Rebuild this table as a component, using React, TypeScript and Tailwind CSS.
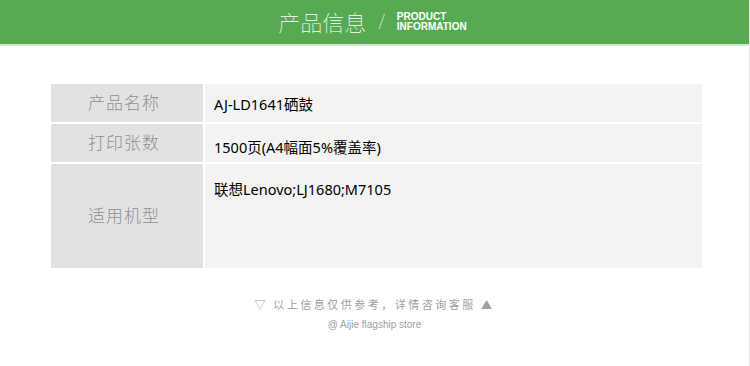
import React from "react";

const rows = [
  { label: "产品名称", value: "AJ-LD1641硒鼓", h: "h-[38px]", pt: "pt-[11px]" },
  { label: "打印张数", value: "1500页(A4幅面5%覆盖率)", h: "h-[38px]", pt: "pt-[14px]" },
  { label: "适用机型", value: "联想Lenovo;LJ1680;M7105", h: "h-[104px]", pt: "pt-[16px]" },
];

export default function App() {
  return (
    <div
      className="w-[750px] h-[366px] bg-white border-r border-[#e8e8e8] overflow-hidden"
      style={{ fontFamily: '"Noto Sans", "Noto Sans CJK SC", sans-serif' }}
    >
      <div className="h-[46px] bg-[#58aa52] border-b-2 border-[#d3e6d0] flex items-center justify-center">
        <div className="flex items-center ml-[-4px]">
          <span className="text-white text-[22px] font-thin tracking-[0px] leading-none">产品信息</span>
          <span className="text-white text-[20px] font-thin mx-[12px] leading-none">/</span>
          <div
            className="text-white text-[10px] font-bold leading-[10px]"
            style={{ fontFamily: '"Liberation Sans", sans-serif' }}
          >
            <div>PRODUCT</div>
            <div>INFORMATION</div>
          </div>
        </div>
      </div>
      <div className="mt-[38px] ml-[51px] w-[651px] flex flex-col gap-[2px]">
        {rows.map((r) => (
          <div key={r.label} className={`flex gap-[2px] ${r.h}`}>
            <div className="w-[152px] bg-[#e2e2e2] flex items-center justify-center pr-[6px] text-[17px] font-light text-[#909090] tracking-[1px]">
              {r.label}
            </div>
            <div className={`flex-1 bg-[#f3f3f3] pl-[9px] ${r.pt} text-[14.5px] text-black leading-[18px]`}>
              {r.value}
            </div>
          </div>
        ))}
      </div>
      <div className="mt-[30px] flex flex-col items-center text-[#a0a0a0]">
        <div className="text-[11px] leading-[14px] tracking-[2.5px]">▽ 以上信息仅供参考，详情咨询客服 ▲</div>
        <div className="text-[10px] leading-[14px] mt-[6px]" style={{ fontFamily: '"Liberation Sans", sans-serif' }}>
          @ Aijie flagship store
        </div>
      </div>
    </div>
  );
}
